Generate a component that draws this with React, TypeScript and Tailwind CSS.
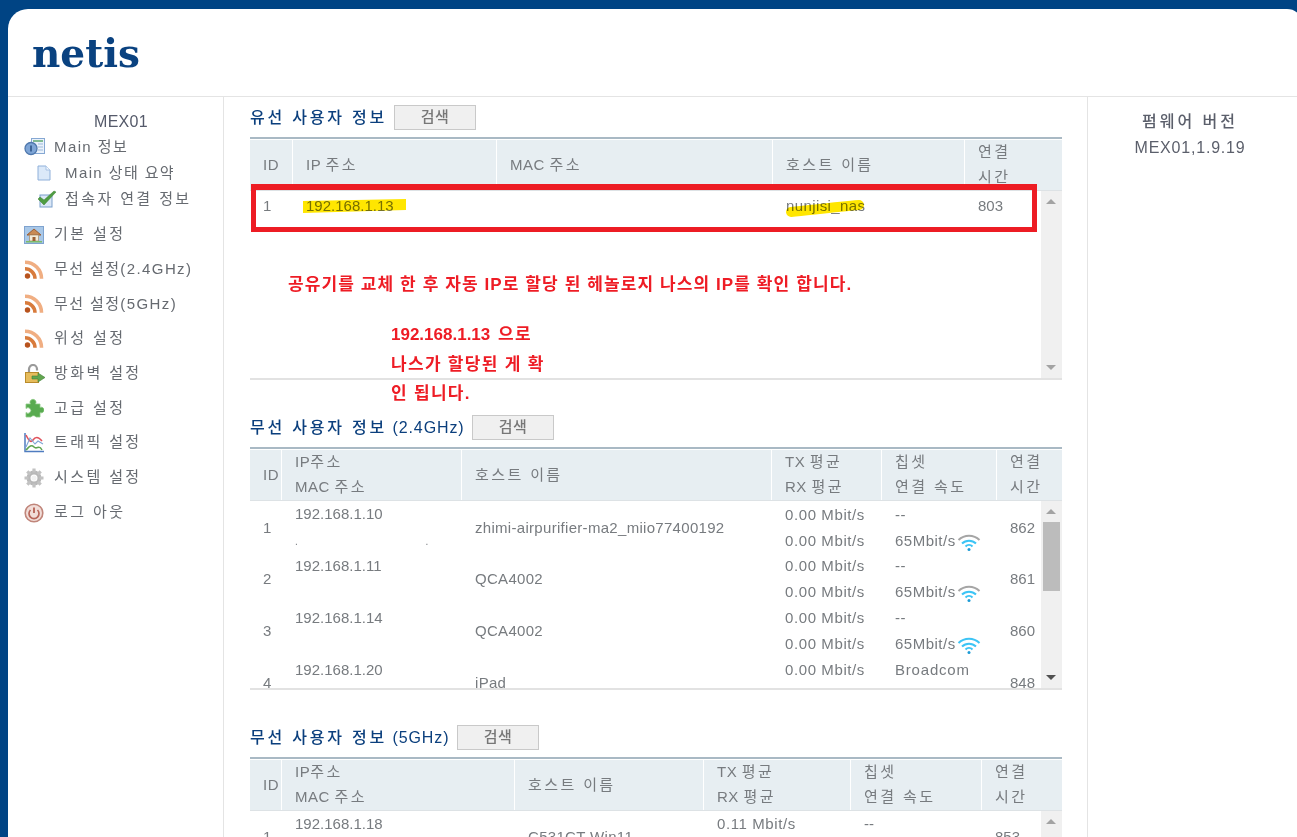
import React from 'react';

// 좌측 메뉴 아이콘
const InfoIcon = () => (
  <svg width="22" height="20" viewBox="0 0 22 20">
    <rect x="7.5" y="1.5" width="13" height="15" fill="#eaf2fb" stroke="#86a8d3" />
    <path d="M9 4h10" stroke="#5ea86f" strokeWidth="1.5" />
    <path d="M14 7h5M14 10h5M14 13h5" stroke="#9db9da" strokeWidth="1" />
    <circle cx="7" cy="11.5" r="6" fill="#7ea5d6" stroke="#4f78ad" strokeWidth="1.3" />
    <rect x="6" y="8.5" width="2" height="6" fill="#3d6598" />
  </svg>
);
const DocIcon = () => (
  <svg width="14" height="16" viewBox="0 0 14 16">
    <path d="M1 1h8l4 4v10H1z" fill="#dbe9f9" stroke="#8fb0da" />
    <path d="M9 1v4h4" fill="#f3f8fe" stroke="#a7c2e4" />
  </svg>
);
const CheckIcon = () => (
  <svg width="20" height="18" viewBox="0 0 20 18">
    <rect x="3" y="5" width="12" height="12" fill="#dbe7f6" stroke="#7b9fcb" />
    <path d="M1 9l2-2 4 3 10-9 2 1-12 13z" fill="#4f9d42" stroke="#3d7f33" strokeWidth="0.5" />
  </svg>
);
const HomeIcon = () => (
  <svg width="20" height="18" viewBox="0 0 20 18">
    <rect x="0.5" y="0.5" width="19" height="17" fill="#a9c8e8" stroke="#7fa3cf" />
    <path d="M3 9l7-6 7 6z" fill="#c98a55" stroke="#9c5f34" />
    <rect x="5.5" y="9" width="9" height="6" fill="#f3ead9" stroke="#a88b66" strokeWidth="0.7" />
    <rect x="8.5" y="11" width="3" height="4" fill="#9c5f34" />
    <rect x="2" y="15" width="16" height="1.5" fill="#7dbb6a" />
  </svg>
);
const RssIcon = () => (
  <svg width="20" height="20" viewBox="0 0 20 20" fill="none">
    <circle cx="3.5" cy="16" r="2.7" fill="#b8531d" />
    <path d="M1 8.8a10 10 0 0 1 10 10" stroke="#d87b3c" strokeWidth="3.6" />
    <path d="M1 2.2a16.5 16.5 0 0 1 16.5 16.5" stroke="#f0ae82" strokeWidth="3.6" />
  </svg>
);
const LockIcon = () => (
  <svg width="22" height="20" viewBox="0 0 22 20" fill="none">
    <path d="M5 9V5a4 4 0 0 1 8 0v1.5" stroke="#9a9a9a" strokeWidth="2.2" />
    <rect x="1.5" y="8.5" width="13" height="10" fill="#e6bc5c" stroke="#b98b2b" />
    <path d="M8 12h6V9l7 4.5L14 18v-3H8z" fill="#62a64f" stroke="#3f7f35" strokeWidth="0.6" />
  </svg>
);
const PuzzleIcon = () => (
  <svg width="20" height="20" viewBox="0 0 20 20">
    <path d="M2 6h4.5a3 3 0 1 1 5 0H16v3.5a2.8 2.8 0 1 1 0 5V19h-4a3 3 0 0 0-5 0H2v-4.5a2.8 2.8 0 1 0 0-4z" fill="#58ab4f" stroke="#8cc983" strokeWidth="0.8" />
  </svg>
);
const ChartIcon = () => (
  <svg width="20" height="20" viewBox="0 0 20 20" fill="none">
    <path d="M1 0v18.5h19" stroke="#4f7cc0" strokeWidth="1.5" />
    <path d="M2 2c3 6 5 8 7 5s5-4 9 1" stroke="#e0525c" strokeWidth="1.6" />
    <path d="M2 14l4-9 5 6 3-3 5 3" stroke="#7ea5d6" strokeWidth="1.1" />
    <path d="M2 17c3-3 5-6 8-3s5-3 8 3" stroke="#5fa552" strokeWidth="1.6" />
  </svg>
);
const GearIcon = () => (
  <svg width="20" height="20" viewBox="0 0 20 20" fill="none">
    <circle cx="10" cy="10" r="5.5" stroke="#b8b8b8" strokeWidth="4" />
    <path d="M10 0.5v4M10 15.5v4M0.5 10h4M15.5 10h4M3.3 3.3l3 3M13.7 13.7l3 3M16.7 3.3l-3 3M6.3 13.7l-3 3" stroke="#c2c2c2" strokeWidth="3.2" />
    <circle cx="10" cy="10" r="2.6" fill="#f2f2f2" />
  </svg>
);
const PowerIcon = () => (
  <svg width="20" height="20" viewBox="0 0 20 20" fill="none">
    <circle cx="10" cy="10" r="8.8" fill="#f1ddd8" stroke="#c0857a" strokeWidth="1.6" />
    <path d="M6.5 7a5 5 0 1 0 7 0" stroke="#b8665a" strokeWidth="1.7" />
    <path d="M10 4.5v5.5" stroke="#b8665a" strokeWidth="1.9" />
  </svg>
);
const WifiIcon = ({ active }: { active?: boolean }) => (
  <svg width="24" height="18" viewBox="0 0 24 18" fill="none" className="ml-[1px] inline-block align-[-5px]">
    <path d="M1.5 7a15 15 0 0 1 21 0" stroke={active ? '#3cc4f5' : '#a5a5a5'} strokeWidth="2" />
    <path d="M5 10.5a10 10 0 0 1 14 0" stroke="#3cc4f5" strokeWidth="2" />
    <path d="M8.5 13.5a5 5 0 0 1 7 0" stroke="#3cc4f5" strokeWidth="2" />
    <circle cx="12" cy="16.5" r="1.5" fill="#1d9bd6" />
  </svg>
);

const MenuRow = ({ icon, label, sub, rowClass, wide }: { icon: React.ReactNode; label: string; sub?: boolean; rowClass: string; wide?: boolean }) => (
  <div className={`flex items-center ${rowClass} ${sub ? 'pl-[29px]' : 'pl-[16px]'}`}>
    <span className={`flex ${sub ? 'w-[28px]' : 'w-[30px]'}`}>{icon}</span>
    <span className={wide ? 'tracking-[2.4px]' : 'tracking-[1.4px]'}>{label}</span>
  </div>
);

const Sidebar = () => (
  <aside className="w-[216px] shrink-0 border-r border-[#e4e4e4] text-[15px] text-[#666a70]">
    <div className="pt-[14px] pl-[86px] text-[16px] leading-[22px] tracking-[0.3px] text-[#555a6a]">MEX01</div>
    <MenuRow icon={<InfoIcon />} label="Main 정보" rowClass="h-[26px] mt-[1px]" />
    <MenuRow icon={<DocIcon />} label="Main 상태 요약" sub rowClass="h-[26px]" />
    <MenuRow icon={<CheckIcon />} label="접속자 연결 정보" sub wide rowClass="h-[26px]" />
    <div className="mt-[5px] flex flex-col">
      <MenuRow icon={<HomeIcon />} label="기본 설정" wide rowClass="h-[35px]" />
      <MenuRow icon={<RssIcon />} label="무선 설정(2.4GHz)" rowClass="h-[35px]" />
      <MenuRow icon={<RssIcon />} label="무선 설정(5GHz)" rowClass="h-[34px]" />
      <MenuRow icon={<RssIcon />} label="위성 설정" wide rowClass="h-[35px]" />
      <MenuRow icon={<LockIcon />} label="방화벽 설정" wide rowClass="h-[35px]" />
      <MenuRow icon={<PuzzleIcon />} label="고급 설정" wide rowClass="h-[34px]" />
      <MenuRow icon={<ChartIcon />} label="트래픽 설정" wide rowClass="h-[35px]" />
      <MenuRow icon={<GearIcon />} label="시스템 설정" wide rowClass="h-[35px]" />
      <MenuRow icon={<PowerIcon />} label="로그 아웃" wide rowClass="h-[35px]" />
    </div>
  </aside>
);

const Scrollbar = ({ thumb, dark, top }: { thumb?: boolean; dark?: boolean; top?: boolean }) => (
  <div className="absolute right-0 top-0 bottom-0 w-[21px] bg-[#f0f0f0]">
    <div className="absolute left-[5px] top-[8px] h-0 w-0 border-x-[5px] border-b-[5px] border-x-transparent border-b-[#a3a3a3]" />
    {thumb && <div className="absolute left-[2px] right-[2px] top-[21px] h-[69px] bg-[#bcbcbc]" />}
    {!top && (
      <div className={`absolute left-[5px] bottom-[8px] h-0 w-0 border-x-[5px] border-t-[5px] border-x-transparent ${dark ? 'border-t-[#505050]' : 'border-t-[#a3a3a3]'}`} />
    )}
  </div>
);

const Cell = ({ children, className = '' }: { children?: React.ReactNode; className?: string }) => (
  <div className={`flex h-full flex-col justify-center whitespace-nowrap pl-[13px] leading-[26px] ${className}`}>{children}</div>
);

const HeadCell = ({ children }: { children?: React.ReactNode }) => (
  <div className="flex h-full flex-col justify-center overflow-hidden border-r border-white pb-[2px] pl-[13px] leading-[25px] tracking-[0.5px] last:border-r-0">{children}</div>
);

// 한글 헤더 글자 폭 맞춤
const Ko = ({ children }: { children: React.ReactNode }) => <span className="tracking-[2.4px]">{children}</span>;

const Section = ({ title, suffix, titleWidth, cols, head, children, last }: {
  title: string;
  suffix?: string;
  titleWidth: string;
  cols: string;
  head: React.ReactNode;
  children: React.ReactNode;
  last?: boolean;
}) => (
  <section className={last ? '' : 'mb-[35px]'}>
    <div className="flex h-[25px] items-center">
      <h2 className={`${titleWidth} whitespace-nowrap text-[16px] font-medium text-[#0b3f7d]`}>
        <span className="tracking-[2.8px]">{title}</span>
        {suffix && <span className="tracking-[0.9px]"> {suffix}</span>}
      </h2>
      <button className="h-[25px] w-[82px] border border-[#c9c9c9] bg-[#f0f0f0] text-[15px] font-medium tracking-[0.5px] text-[#777]">검색</button>
    </div>
    <div className="relative mt-[7px] border-t-2 border-[#a9b9c4] pt-[1px] text-[15px] text-[#777b7f]">
      <div className={`grid h-[51px] ${cols} border-b border-[#dde2e5] bg-[#e7eef2]`}>{head}</div>
      {children}
    </div>
  </section>
);

const Line2 = ({ a, b }: { a: React.ReactNode; b: React.ReactNode }) => (
  <>
    <div>{a}</div>
    <div>{b}</div>
  </>
);

const wirelessHead = (
  <>
    <HeadCell>ID</HeadCell>
    <HeadCell><Line2 a={<>IP<Ko>주소</Ko></>} b={<>MAC <Ko>주소</Ko></>} /></HeadCell>
    <HeadCell><Ko>호스트 이름</Ko></HeadCell>
    <HeadCell><Line2 a={<>TX <Ko>평균</Ko></>} b={<>RX <Ko>평균</Ko></>} /></HeadCell>
    <HeadCell><Line2 a={<Ko>칩셋</Ko>} b={<Ko>연결 속도</Ko>} /></HeadCell>
    <HeadCell><Line2 a={<Ko>연결</Ko>} b={<Ko>시간</Ko>} /></HeadCell>
  </>
);

const wifiRows = [
  { id: 1, ip: '192.168.1.10', host: 'zhimi-airpurifier-ma2_miio77400192', time: 862, active: false },
  { id: 2, ip: '192.168.1.11', host: 'QCA4002', time: 861, active: false },
  { id: 3, ip: '192.168.1.14', host: 'QCA4002', time: 860, active: true },
];

const WiredTable = () => (
  <Section
    title="유선 사용자 정보"
    titleWidth="w-[144px]"
    cols="grid-cols-[43px_204px_276px_192px_97px]"
    head={
      <>
        <HeadCell>ID</HeadCell>
        <HeadCell><div>IP <Ko>주소</Ko></div></HeadCell>
        <HeadCell><div>MAC <Ko>주소</Ko></div></HeadCell>
        <HeadCell><Ko>호스트 이름</Ko></HeadCell>
        <HeadCell><Line2 a={<Ko>연결</Ko>} b={<Ko>시간</Ko>} /></HeadCell>
      </>
    }
  >
    <div className="relative h-[189px] overflow-hidden border-b-2 border-[#e2e2e2]">
      <div className="grid h-[30px] grid-cols-[43px_204px_276px_192px_97px]">
        <Cell>1</Cell>
        <Cell>192.168.1.13</Cell>
        <Cell />
        <Cell className="tracking-[0.4px]">nunjisi_nas</Cell>
        <Cell>803</Cell>
      </div>
      <Scrollbar />
    </div>
    {/* 설명 글씨는 표 위에 얹혀 있음 */}
    <p className="absolute left-[38px] top-[133px] whitespace-nowrap text-[17px] font-bold leading-[26px] tracking-[1.1px] text-[#ee1c25]">
      공유기를 교체 한 후 자동 IP로 할당 된 헤놀로지 나스의 IP를 확인 합니다.
    </p>
    <p className="absolute left-[141px] top-[181px] whitespace-nowrap text-[17px] font-bold leading-[29.5px] text-[#ee1c25]">
      192.168.1.13 <span className="ml-[3px] tracking-[1.5px]">으로</span>
      <br />
      <span className="tracking-[1.3px]">나스가 할당된 게 확</span>
      <br />
      <span className="tracking-[1.3px]">인 됩니다.</span>
    </p>
    {/* 노란 형광펜 + 빨간 박스 */}
    <svg className="absolute left-[50px] top-[55px] mix-blend-multiply" width="620" height="30" viewBox="0 0 620 30" fill="none">
      <path d="M3 7l103-2v11l-103 3z" fill="#ffe600" />
      <path d="M491 18c20-2 45-5 68-7" stroke="#ffe600" strokeWidth="10" strokeLinecap="round" />
    </svg>
    <div className="absolute left-[1px] top-[45px] h-[48px] w-[786px] border-x-[5px] border-t-[6px] border-b-[5px] border-[#ed1c24]" />
  </Section>
);

const Wifi24Table = () => (
  <Section
    title="무선 사용자 정보"
    suffix="(2.4GHz)"
    titleWidth="w-[222px]"
    cols="grid-cols-[32px_180px_310px_110px_115px_65px]"
    head={wirelessHead}
  >
    <div className="relative h-[189px] overflow-hidden border-b-2 border-[#e2e2e2]">
      {wifiRows.map((r) => (
        <div key={r.id} className="grid h-[52px] grid-cols-[32px_180px_310px_110px_115px_65px]">
          <Cell>{r.id}</Cell>
          <Cell><Line2 a={r.ip} b={r.id === 1 ? <span className="text-[10px]">.&nbsp;&nbsp;&nbsp;&nbsp;&nbsp;&nbsp;&nbsp;&nbsp;&nbsp;&nbsp;&nbsp;&nbsp;&nbsp;&nbsp;&nbsp;&nbsp;&nbsp;&nbsp;&nbsp;&nbsp;&nbsp;&nbsp;&nbsp;&nbsp;&nbsp;&nbsp;&nbsp;&nbsp;&nbsp;&nbsp;&nbsp;&nbsp;&nbsp;&nbsp;&nbsp;&nbsp;&nbsp;&nbsp;&nbsp;&nbsp;&nbsp;&nbsp;&nbsp;&nbsp;&nbsp;&nbsp;.</span> : <>&nbsp;</>} /></Cell>
          <Cell className="tracking-[0.3px]">{r.host}</Cell>
          <Cell className="tracking-[0.6px]"><Line2 a="0.00 Mbit/s" b="0.00 Mbit/s" /></Cell>
          <Cell className="tracking-[0.5px]"><Line2 a="--" b={<>65Mbit/s<WifiIcon active={r.active} /></>} /></Cell>
          <Cell>{r.time}</Cell>
        </div>
      ))}
      <div className="grid h-[52px] grid-cols-[32px_180px_310px_110px_115px_65px]">
        <Cell>4</Cell>
        <Cell><Line2 a="192.168.1.20" b={<>&nbsp;</>} /></Cell>
        <Cell className="tracking-[0.3px]">iPad</Cell>
        <Cell className="tracking-[0.6px]"><Line2 a="0.00 Mbit/s" b="0.00 Mbit/s" /></Cell>
        <Cell className="tracking-[0.8px]"><Line2 a="Broadcom" b="--" /></Cell>
        <Cell>848</Cell>
      </div>
      <Scrollbar thumb dark />
    </div>
  </Section>
);

const Wifi5Table = () => (
  <Section
    title="무선 사용자 정보"
    suffix="(5GHz)"
    titleWidth="w-[207px]"
    cols="grid-cols-[32px_233px_189px_147px_131px_80px]"
    last
    head={wirelessHead}
  >
    <div className="relative h-[60px] overflow-hidden">
      <div className="grid h-[52px] grid-cols-[32px_233px_189px_147px_131px_80px]">
        <Cell>1</Cell>
        <Cell><Line2 a="192.168.1.18" b={<>&nbsp;</>} /></Cell>
        <Cell className="tracking-[0.3px]">C531CT-Win11</Cell>
        <Cell className="tracking-[0.6px]"><Line2 a="0.11 Mbit/s" b="0.11 Mbit/s" /></Cell>
        <Cell><Line2 a="--" b="--" /></Cell>
        <Cell>853</Cell>
      </div>
      <Scrollbar top />
    </div>
  </Section>
);

export default function App() {
  return (
    <div className="h-[837px] w-full overflow-hidden bg-[#004484] pl-[8px] pt-[9px] font-['Liberation_Sans','Noto_Sans_CJK_KR',sans-serif]">
      <div className="h-full w-[1295px] overflow-hidden rounded-tl-[20px] rounded-tr-[16px] bg-white">
        <header className="flex h-[88px] items-center border-b border-[#e4e4e4] pl-[24px] pt-[2px]">
          <span className="font-['DejaVu_Serif',serif] text-[39px] font-bold leading-none text-[#0a4280]">netis</span>
        </header>
        <div className="flex h-full">
          <Sidebar />
          <main className="w-[864px] shrink-0 border-r border-[#e4e4e4] pl-[26px] pr-[25px] pt-[8px]">
            <WiredTable />
            <Wifi24Table />
            <Wifi5Table />
          </main>
          <aside className="w-[204px] pt-[12px] text-center text-[16px] leading-[26px] text-[#5b5f6b]">
            <div className="font-medium tracking-[3px]">펌웨어 버전</div>
            <div className="tracking-[0.8px]">MEX01,1.9.19</div>
          </aside>
        </div>
      </div>
    </div>
  );
}
